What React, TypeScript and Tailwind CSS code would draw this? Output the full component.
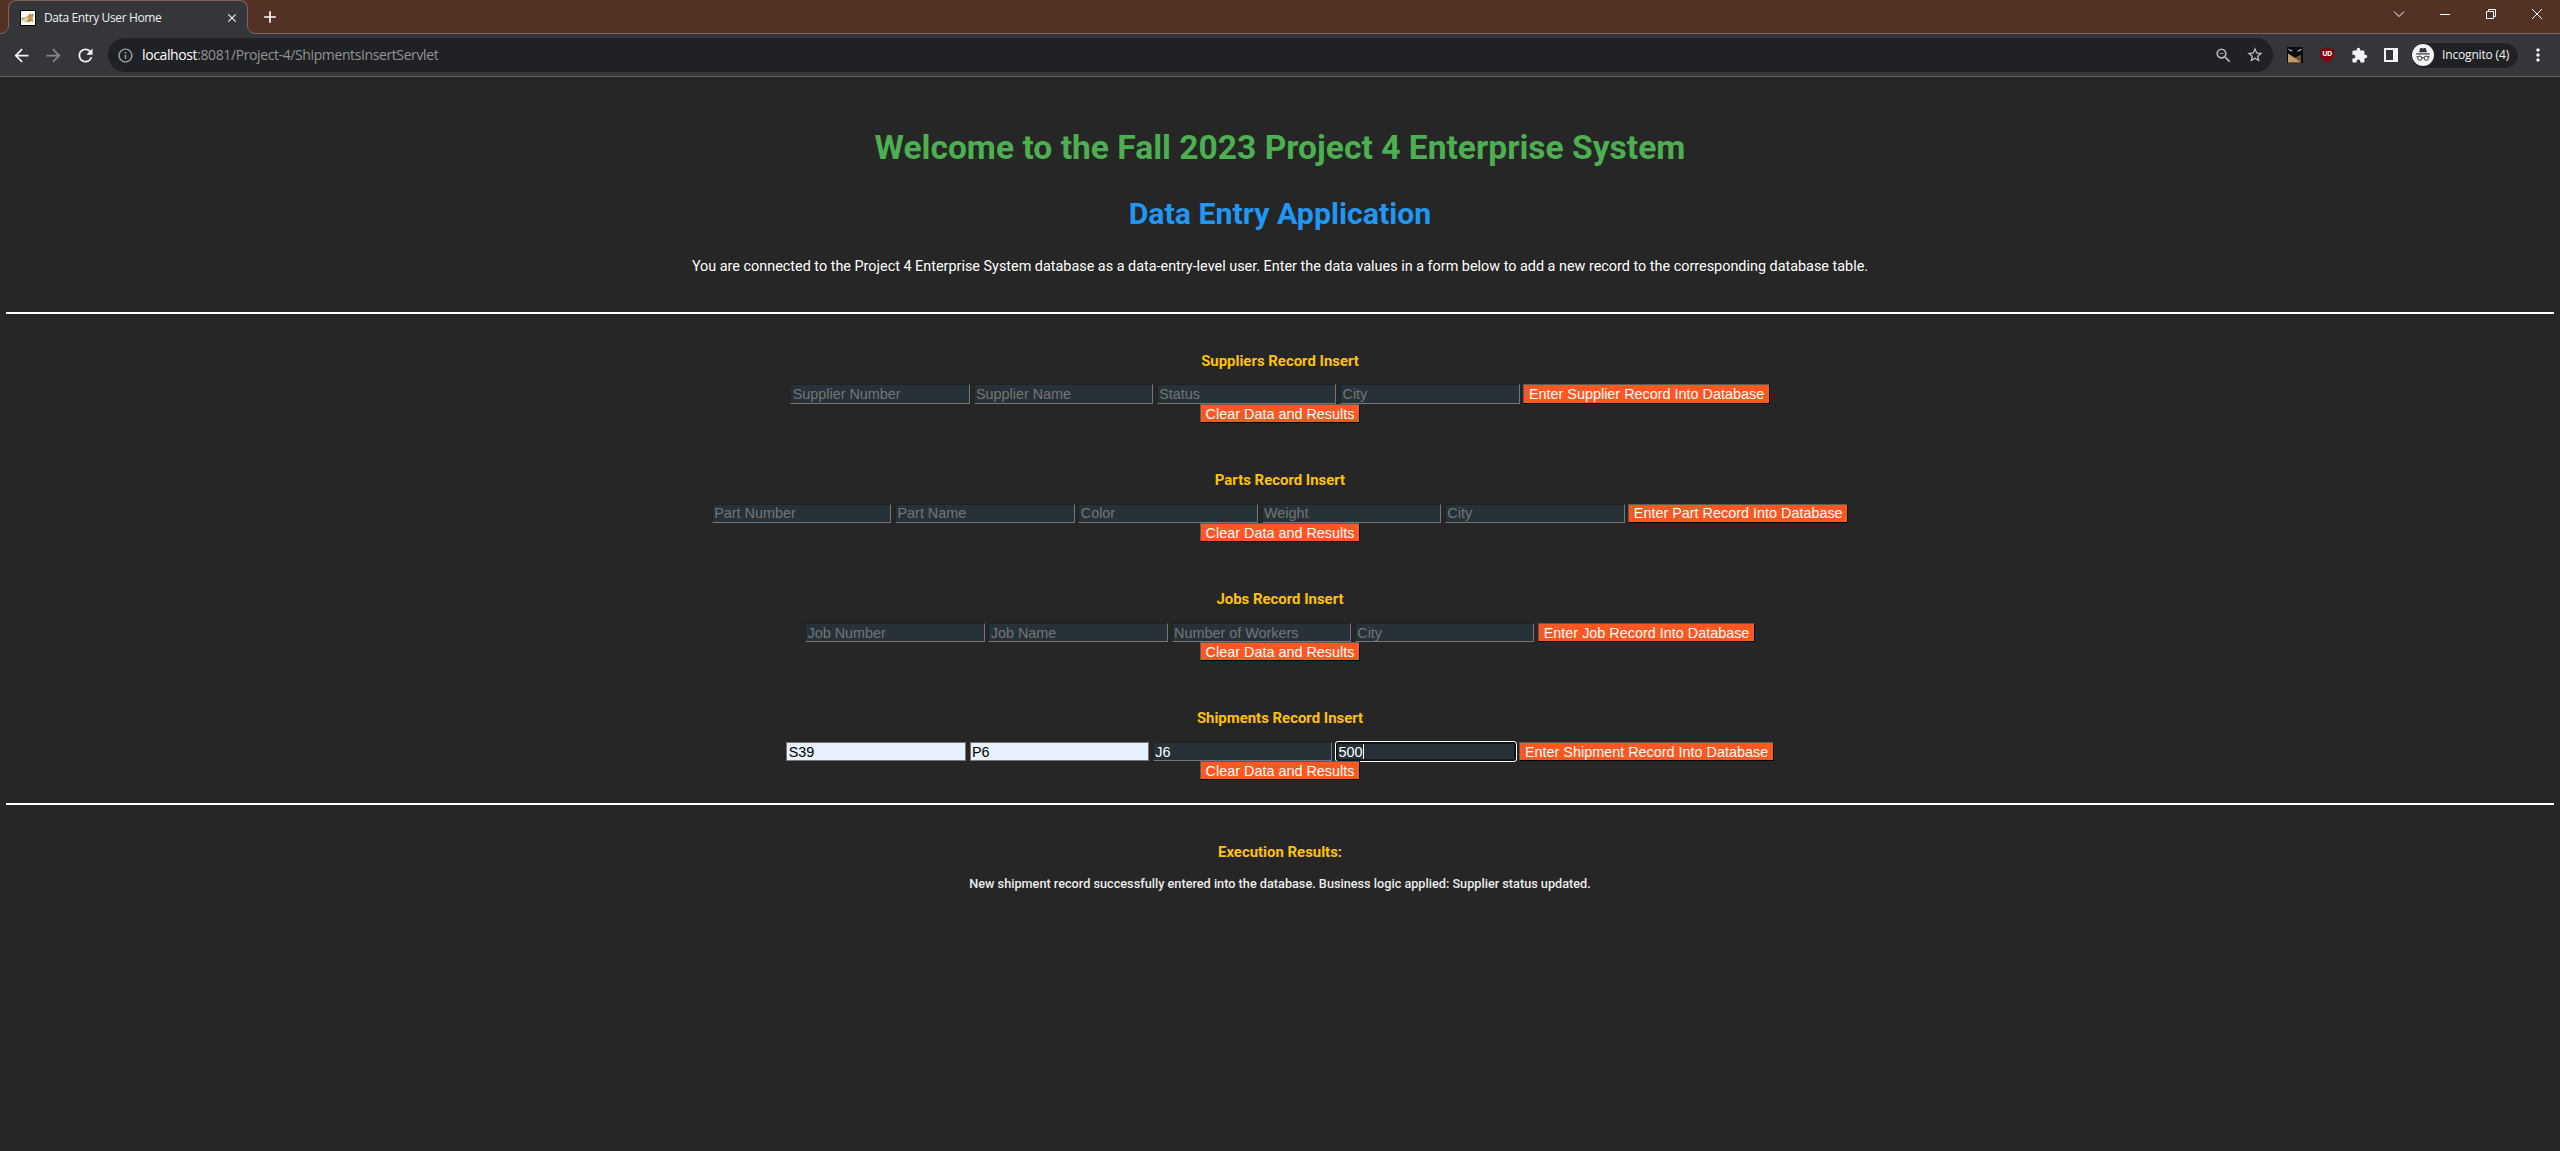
import type { ReactNode } from "react";
import {
  MdAdd,
  MdArrowBack,
  MdArrowForward,
  MdClose,
  MdExtension,
  MdInfoOutline,
  MdMoreVert,
  MdRefresh,
  MdStarOutline,
  MdZoomOut,
} from "react-icons/md";

type Field = { label: string; value?: string; state?: "autofill" | "focus" };

type RecordForm = { title: string; submit: string; rowClass: string; fields: Field[] };

const forms: RecordForm[] = [
  {
    title: "Suppliers Record Insert",
    submit: "Enter Supplier Record Into Database",
    rowClass: "h-[20px] *:pt-px",
    fields: [{ label: "Supplier Number" }, { label: "Supplier Name" }, { label: "Status" }, { label: "City" }],
  },
  {
    title: "Parts Record Insert",
    submit: "Enter Part Record Into Database",
    rowClass: "h-[19px]",
    fields: [
      { label: "Part Number" },
      { label: "Part Name" },
      { label: "Color" },
      { label: "Weight" },
      { label: "City" },
    ],
  },
  {
    title: "Jobs Record Insert",
    submit: "Enter Job Record Into Database",
    rowClass: "h-[19px] *:pt-px",
    fields: [{ label: "Job Number" }, { label: "Job Name" }, { label: "Number of Workers" }, { label: "City" }],
  },
  {
    title: "Shipments Record Insert",
    submit: "Enter Shipment Record Into Database",
    rowClass: "h-[19px] *:pt-px",
    fields: [
      { label: "Supplier Number", value: "S39", state: "autofill" },
      { label: "Part Number", value: "P6", state: "autofill" },
      { label: "Job Number", value: "J6" },
      { label: "Quantity", value: "500", state: "focus" },
    ],
  },
];

function TabIcon() {
  return (
    <svg className="h-4 w-4 shrink-0" viewBox="0 0 16 16">
      <rect width="16" height="16" fill="#000" />
      <rect x="1" y="1" width="14" height="14" fill="#fff" />
      <path d="M8.500 5 9 3.200l1.500 1L13 3.200l.5 2.400-1 1.800.5 2.600.5 2-2.500-.8L8 12H5l-1.500-1.500L5 8z" fill="#c99c4e" />
      <path d="M2.500 11.500C2 9.500 3 8.500 5 8l2.500-.6.8 2.400L6 12H4.500z" fill="#e3cfa6" />
      <path d="M1.800 10C2 8.200 3 7.800 4.500 7.600M8 12l3-2.500M10 5.800h.8M12 5.800h.7" stroke="#5b4a3c" strokeWidth=".9" fill="none" />
    </svg>
  );
}

function TitleBar() {
  return (
    <div className="flex h-[34px] items-start border-b border-[#7d655b] bg-[#533124]">
      <div className="relative ml-2 flex h-[34px] w-[240px] shrink-0 items-center rounded-t-[8px] border border-b-0 border-[#7d655b] bg-[#35363a] pl-[11px]">
        <svg className="absolute -left-[8px] bottom-0 h-2 w-2" viewBox="0 0 8 8">
          <path d="M8 0v8H0V7.500A7.500 7.500 0 0 0 7.500 0z" fill="#35363a" />
          <path d="M0 7.500A7.500 7.500 0 0 0 7.500 0" fill="none" stroke="#7d655b" />
        </svg>
        <svg className="absolute -right-[8px] bottom-0 h-2 w-2" viewBox="0 0 8 8">
          <path d="M0 0v8h8V7.500A7.500 7.500 0 0 1 .5 0z" fill="#35363a" />
          <path d="M8 7.500A7.500 7.500 0 0 1 .5 0" fill="none" stroke="#7d655b" />
        </svg>
        <TabIcon />
        <span className="ml-2 whitespace-nowrap font-['Open_Sans',sans-serif] text-[12px] leading-4 tracking-[-0.38px] text-[#eff0f2]">
          Data Entry User Home
        </span>
        <MdClose className="ml-auto mr-[8px] h-[14px] w-[14px] text-[#eceff1]" />
      </div>
      <MdAdd className="ml-[12px] mt-[7px] h-5 w-5 text-white" />
      <div className="ml-auto flex h-7 items-center text-white">
        <svg className="h-[10px] w-[12px]" viewBox="0 0 12 10" fill="none" stroke="currentColor">
          <path d="M1 2.500 6 7.500l5-5" />
        </svg>
        <svg className="ml-[35px] h-[10px] w-[10px]" viewBox="0 0 10 10" stroke="currentColor">
          <path d="M0 5.500h10" />
        </svg>
        <svg className="ml-[36px] h-[10px] w-[10px]" viewBox="0 0 10 10" fill="none" stroke="currentColor">
          <path d="M.5 2.500h7v7h-7zM2.500 2V.5h7v7H8" />
        </svg>
        <svg className="ml-[36px] mr-[18px] h-[10px] w-[10px]" viewBox="0 0 10 10" fill="none" stroke="currentColor">
          <path d="m0 0 10 10M10 0 0 10" />
        </svg>
      </div>
    </div>
  );
}

function MaskIcon() {
  return (
    <svg className="h-4 w-4" viewBox="0 0 16 16">
      <rect width="16" height="16" fill="#0a0a0a" />
      <path d="M1 6.500 8 11l6-3v7.500H1z" fill="#c39b68" />
      <path d="M14 8v7.500L8 11z" fill="#6b5334" />
      <path d="M1.500 2 5.500 4l-2.500-.2zM14.500 2l-4 2 2.500-.2z" fill="#c9c9c9" stroke="#c9c9c9" strokeWidth=".5" />
    </svg>
  );
}

function ShieldIcon() {
  return (
    <div className="relative flex h-4 w-[14px] justify-center">
      <svg className="absolute inset-0 h-4 w-[14px]" viewBox="0 0 14 16">
        <path d="M7 .3C9 1.500 11.500 2 13.700 2v6c0 4-3 6.200-6.700 7.700C3.300 14.200.3 12 .3 8V2C2.500 2 5 1.500 7 .3z" fill="#800610" />
      </svg>
      <span className="relative mt-[3px] font-['Open_Sans',sans-serif] text-[7px] font-bold leading-[8px] tracking-[-0.4px] text-white">
        UD
      </span>
    </div>
  );
}

function IncognitoIcon() {
  return (
    <svg className="h-[22px] w-[22px] shrink-0" viewBox="0 0 22 22">
      <circle cx="11" cy="11" r="11" fill="#f1f3f4" />
      <path d="M8.300 4h1.400l1.300.4 1.300-.4h1.400L15 8.300H7z" fill="#35363a" />
      <path d="M4.300 9.300h13.400v1.200H4.300z" fill="#35363a" />
      <g fill="none" stroke="#35363a">
        <circle cx="7.800" cy="14.200" r="2.100" />
        <circle cx="14.200" cy="14.200" r="2.100" />
        <path d="M9.900 13.900q1.100-.7 2.200 0M4.500 12.700h1.600M15.900 12.700h1.600" />
      </g>
    </svg>
  );
}

function Toolbar() {
  return (
    <div className="flex h-[43px] items-center border-b border-[#5f6064] bg-[#35363a] text-[#f1f3f4]">
      <MdArrowBack className="ml-[11px] h-[21px] w-[21px]" />
      <MdArrowForward className="ml-[11px] h-[21px] w-[21px] text-[#86878a]" />
      <MdRefresh className="ml-[11px] h-[21px] w-[21px]" />
      <div className="ml-[12px] flex h-[34px] w-[2165px] items-center rounded-full bg-[#202124]">
        <MdInfoOutline className="ml-[9px] h-[17px] w-[17px] text-[#9aa0a6]" />
        <span className="ml-[8px] whitespace-nowrap font-['Open_Sans',sans-serif] text-[14px] leading-5 tracking-[-0.39px] text-[#929495]">
          <span className="text-white">localhost</span>:8081/Project-4/ShipmentsInsertServlet
        </span>
        <MdZoomOut className="ml-auto h-[19px] w-[19px] text-[#b4b6b9]" />
        <MdStarOutline className="ml-[13px] mr-[9px] h-[18px] w-[18px] text-[#c3c5c8]" />
      </div>
      <div className="ml-[14px]">
        <MaskIcon />
      </div>
      <div className="ml-[17px]">
        <ShieldIcon />
      </div>
      <MdExtension className="ml-[17px] h-[17px] w-[17px]" />
      <div className="ml-[16px] h-[14px] w-[14px] border-2 border-r-[5px] border-[#f1f3f4]" />
      <div className="ml-[12px] flex h-[27px] w-[109px] items-center rounded-full border border-[#3c3d41] bg-[#202124] pl-px">
        <IncognitoIcon />
        <span className="ml-[8px] whitespace-nowrap font-['Open_Sans',sans-serif] text-[12px] leading-4 tracking-[-0.16px] text-[#f1f3f4]">
          Incognito (4)
        </span>
      </div>
      <MdMoreVert className="ml-[9px] h-5 w-5" />
    </div>
  );
}

function TextField({ label, value, state }: Field) {
  const base = "flex w-[179.6px] items-start border pl-[1.400px] leading-4";
  if (state === "autofill") {
    return <div className={`${base} border-[#767676] bg-[#e8f0fe] text-black`}>{value}</div>;
  }
  if (state === "focus") {
    return (
      <div className={`${base} rounded-[2px] border-[#101010] bg-[#263238] text-white shadow-[inset_0_0_0_1px_#14191c] outline outline-white`}>
        {value}
        <span className="h-[15px] w-px bg-white" />
      </div>
    );
  }
  return (
    <div className={`${base} border-b-[#767676] border-l-[#1f2123] border-r-[#767676] border-t-[#1f2123] bg-[#263238] ${value ? "text-white" : "text-[#757575]"}`}>
      {value ?? label}
    </div>
  );
}

function ActionButton({ children, className = "" }: { children: ReactNode; className?: string }) {
  return (
    <button className={`flex items-start whitespace-nowrap border border-b-black border-l-[#5a5a5a] border-r-black border-t-[#5a5a5a] bg-[#ff5722] px-[4.600px] leading-4 text-white ${className}`}>
      {children}
    </button>
  );
}

function RecordSection({ form }: { form: RecordForm }) {
  return (
    <section className="flex h-[119px] flex-col items-center">
      <h3 className="text-[14.93px] font-bold leading-[18px] text-[#ffc107]">{form.title}</h3>
      <div className="flex flex-col items-center font-['Liberation_Sans',Arial,sans-serif] text-[14.4px]">
        <div className="flex h-[34px] items-end">
          <div className={`flex gap-[3.700px] ${form.rowClass}`}>
            {form.fields.map((field) => (
              <TextField key={field.label} {...field} />
            ))}
            <ActionButton>{form.submit}</ActionButton>
          </div>
        </div>
        <ActionButton className="h-[19.4px] pt-px">Clear Data and Results</ActionButton>
      </div>
    </section>
  );
}

export default function App() {
  return (
    <div className="flex h-[1151px] w-[2560px] flex-col overflow-hidden bg-[#262626]">
      <TitleBar />
      <Toolbar />
      <main className="flex flex-col px-[6px] text-center font-['Roboto',sans-serif] text-white">
        <h1 className="mt-[51px] text-[33.600px] font-bold leading-[40px] text-[#4caf50]">
          Welcome to the Fall 2023 Project 4 Enterprise System
        </h1>
        <h2 className="mt-[28px] text-[30.300px] font-bold leading-[36px] text-[#2196f3]">Data Entry Application</h2>
        <p className="mt-[26px] text-[14.4px] leading-[18px]">
          You are connected to the Project 4 Enterprise System database as a data-entry-level user. Enter the data values in
          a form below to add a new record to the corresponding database table.
        </p>
        <hr className="mt-[36px] border-t-2 border-white" />
        <div className="mt-[38px] h-[451px]">
          {forms.map((form) => (
            <RecordSection key={form.title} form={form} />
          ))}
        </div>
        <hr className="border-t-2 border-white" />
        <h3 className="mt-[38px] text-[14.93px] font-bold leading-[18px] text-[#ffc107]">Execution Results:</h3>
        <p className="mt-[15px] text-[12.700px] font-medium leading-4 text-[#ececec]">
          New shipment record successfully entered into the database. Business logic applied: Supplier status updated.
        </p>
      </main>
    </div>
  );
}
